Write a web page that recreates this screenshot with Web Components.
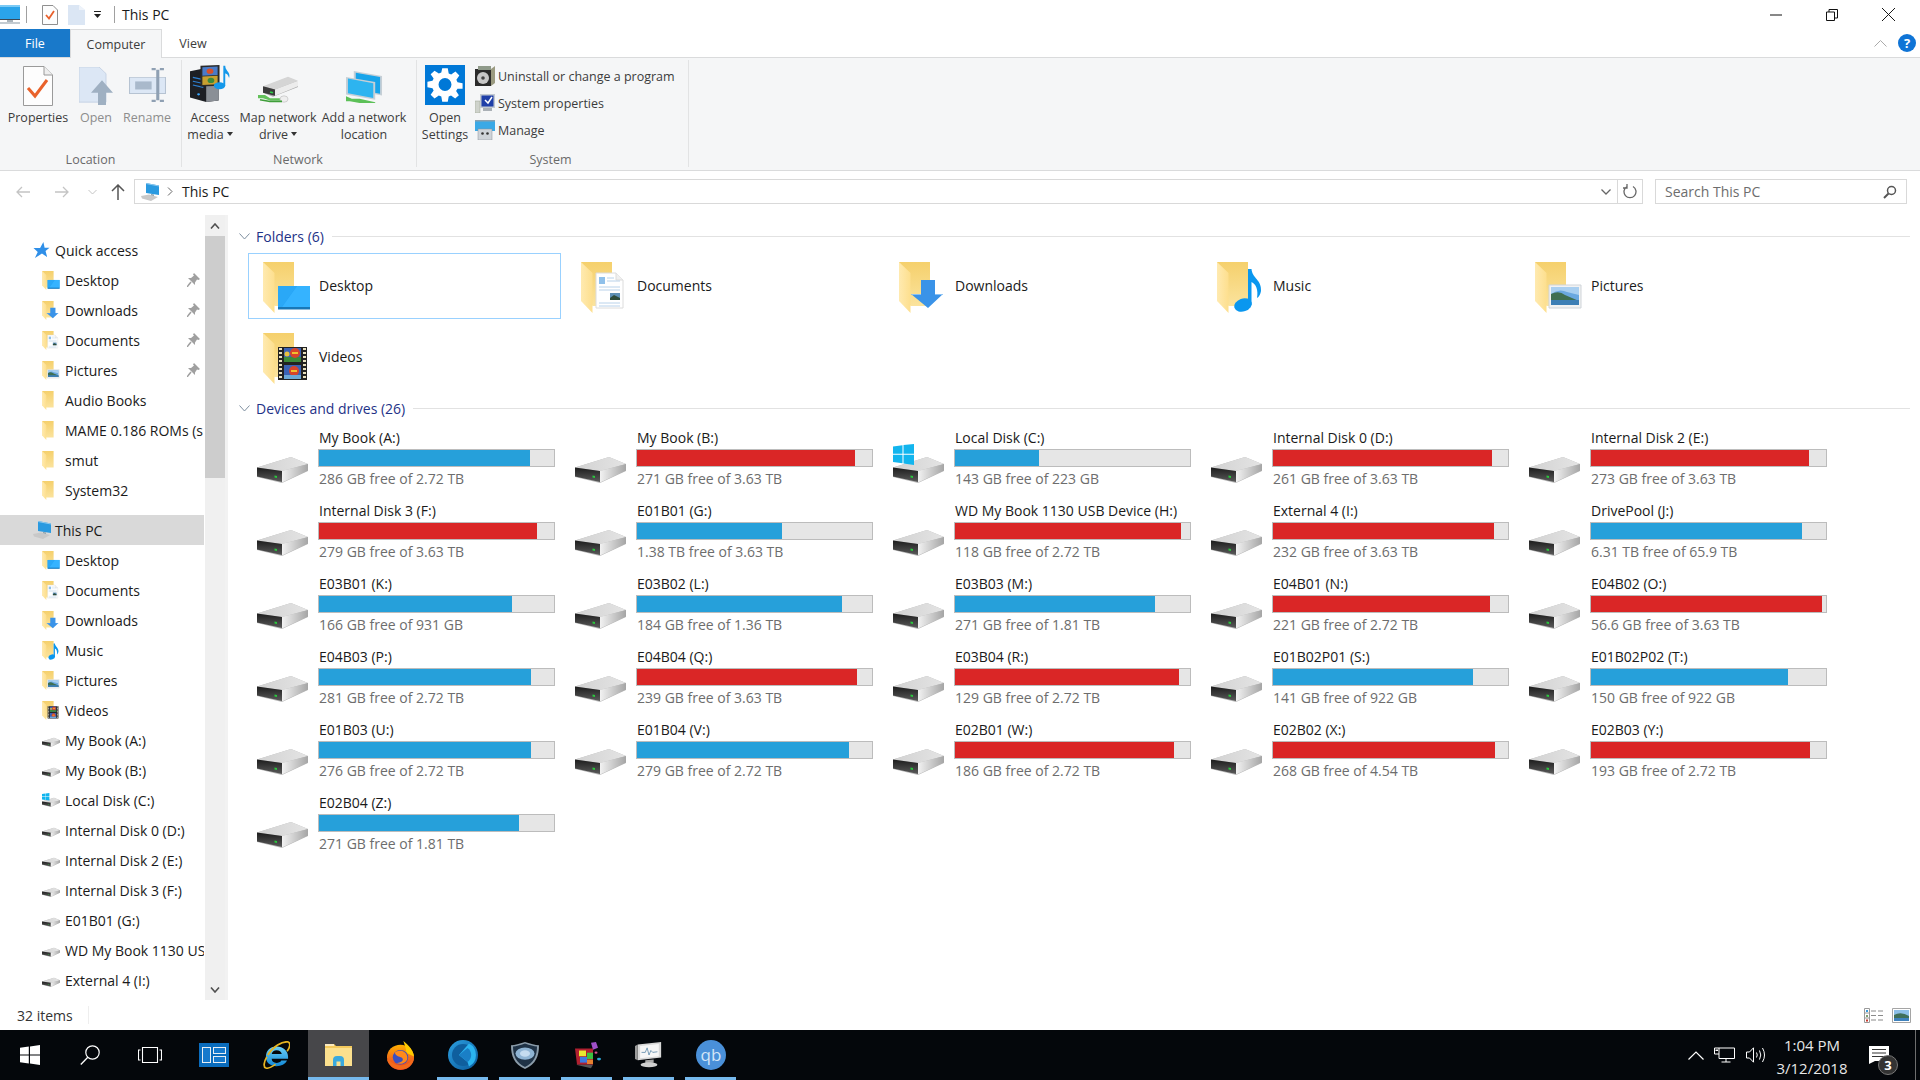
<!DOCTYPE html>
<html>
<head>
<meta charset="utf-8">
<title>This PC</title>
<style>
  html,body{margin:0;padding:0;background:#fff;overflow:hidden}
  body{font-family:"Open Sans","Liberation Sans",sans-serif;font-size:14px;color:#1a1a1a}
</style>
</head>
<body>
<win-shell>
  <title-bar></title-bar>
  <ribbon-tabs></ribbon-tabs>
  <ribbon-panel></ribbon-panel>
  <address-row></address-row>
  <explorer-main>
    <nav-pane slot="nav">
      <nav-item icon="star" level="1">Quick access</nav-item>
      <nav-item icon="desktop" pin>Desktop</nav-item>
      <nav-item icon="downloads" pin>Downloads</nav-item>
      <nav-item icon="documents" pin>Documents</nav-item>
      <nav-item icon="pictures" pin>Pictures</nav-item>
      <nav-item icon="folder">Audio Books</nav-item>
      <nav-item icon="folder">MAME 0.186 ROMs (s</nav-item>
      <nav-item icon="folder">smut</nav-item>
      <nav-item icon="folder">System32</nav-item>
      <nav-item icon="pc" level="1" selected style="margin-top:10px">This PC</nav-item>
      <nav-item icon="desktop">Desktop</nav-item>
      <nav-item icon="documents">Documents</nav-item>
      <nav-item icon="downloads">Downloads</nav-item>
      <nav-item icon="music">Music</nav-item>
      <nav-item icon="pictures">Pictures</nav-item>
      <nav-item icon="videos">Videos</nav-item>
      <nav-item icon="drive">My Book (A:)</nav-item>
      <nav-item icon="drive">My Book (B:)</nav-item>
      <nav-item icon="windrive">Local Disk (C:)</nav-item>
      <nav-item icon="drive">Internal Disk 0 (D:)</nav-item>
      <nav-item icon="drive">Internal Disk 2 (E:)</nav-item>
      <nav-item icon="drive">Internal Disk 3 (F:)</nav-item>
      <nav-item icon="drive">E01B01 (G:)</nav-item>
      <nav-item icon="drive">WD My Book 1130 USB Device (H:)</nav-item>
      <nav-item icon="drive">External 4 (I:)</nav-item>
    </nav-pane>
    <content-view slot="content">
      <group-header>Folders (6)</group-header>
      <tile-grid style="margin-top:6px">
        <folder-tile icon="desktop" selected>Desktop</folder-tile>
        <folder-tile icon="documents">Documents</folder-tile>
        <folder-tile icon="downloads">Downloads</folder-tile>
        <folder-tile icon="music">Music</folder-tile>
        <folder-tile icon="pictures">Pictures</folder-tile>
        <folder-tile icon="videos">Videos</folder-tile>
      </tile-grid>
      <group-header style="margin-top:7px">Devices and drives (26)</group-header>
      <tile-grid style="margin-top:5px">
        <drive-tile pct="89.9" free="286 GB free of 2.72 TB">My Book (A:)</drive-tile>
        <drive-tile pct="92.9" red free="271 GB free of 3.63 TB">My Book (B:)</drive-tile>
        <drive-tile pct="35.9" win free="143 GB free of 223 GB">Local Disk (C:)</drive-tile>
        <drive-tile pct="93" red free="261 GB free of 3.63 TB">Internal Disk 0 (D:)</drive-tile>
        <drive-tile pct="92.9" red free="273 GB free of 3.63 TB">Internal Disk 2 (E:)</drive-tile>
        <drive-tile pct="92.7" red free="279 GB free of 3.63 TB">Internal Disk 3 (F:)</drive-tile>
        <drive-tile pct="61.7" free="1.38 TB free of 3.63 TB">E01B01 (G:)</drive-tile>
        <drive-tile pct="96" red free="118 GB free of 2.72 TB">WD My Book 1130 USB Device (H:)</drive-tile>
        <drive-tile pct="94" red free="232 GB free of 3.63 TB">External 4 (I:)</drive-tile>
        <drive-tile pct="89.6" free="6.31 TB free of 65.9 TB">DrivePool (J:)</drive-tile>
        <drive-tile pct="82.2" free="166 GB free of 931 GB">E03B01 (K:)</drive-tile>
        <drive-tile pct="87.2" free="184 GB free of 1.36 TB">E03B02 (L:)</drive-tile>
        <drive-tile pct="85" free="271 GB free of 1.81 TB">E03B03 (M:)</drive-tile>
        <drive-tile pct="92.4" red free="221 GB free of 2.72 TB">E04B01 (N:)</drive-tile>
        <drive-tile pct="98.5" red free="56.6 GB free of 3.63 TB">E04B02 (O:)</drive-tile>
        <drive-tile pct="90" free="281 GB free of 2.72 TB">E04B03 (P:)</drive-tile>
        <drive-tile pct="93.8" red free="239 GB free of 3.63 TB">E04B04 (Q:)</drive-tile>
        <drive-tile pct="95.4" red free="129 GB free of 2.72 TB">E03B04 (R:)</drive-tile>
        <drive-tile pct="85" free="141 GB free of 922 GB">E01B02P01 (S:)</drive-tile>
        <drive-tile pct="84" free="150 GB free of 922 GB">E01B02P02 (T:)</drive-tile>
        <drive-tile pct="90" free="276 GB free of 2.72 TB">E01B03 (U:)</drive-tile>
        <drive-tile pct="90" free="279 GB free of 2.72 TB">E01B04 (V:)</drive-tile>
        <drive-tile pct="93.3" red free="186 GB free of 2.72 TB">E02B01 (W:)</drive-tile>
        <drive-tile pct="94.4" red free="268 GB free of 4.54 TB">E02B02 (X:)</drive-tile>
        <drive-tile pct="93" red free="193 GB free of 2.72 TB">E02B03 (Y:)</drive-tile>
        <drive-tile pct="85" free="271 GB free of 1.81 TB">E02B04 (Z:)</drive-tile>
      </tile-grid>
    </content-view>
  </explorer-main>
  <status-bar></status-bar>
  <task-bar></task-bar>
</win-shell>

<script>
// svg helpers, ids are per shadow root so the gradients can repeat between elements
const svg=(vb,w,h,body,extra='')=>`<svg xmlns="http://www.w3.org/2000/svg" viewBox="${vb}" width="${w}" height="${h}" ${extra}>${body}</svg>`;
const squash='preserveAspectRatio="none"';
const lift=n=>`style="margin-bottom:${n}px"`;

const overlays={
  folder:'',
  desktop:`<path d="M15 24H47V47H15Z" fill="#1c9af0"/><path d="M15 24H34L19 45H15Z" fill="#2aa8f7"/><path d="M34 24H47V45H19Z" fill="#35b3ff"/><path d="M15 45H47V47.5H15Z" fill="#1878b8"/>`,
  documents:`<path d="M15 11H35L42 18V46H15Z" fill="#fff" stroke="#dcdcdc"/><path d="M35 11V18H42" fill="#f0f0f0" stroke="#dcdcdc"/><path d="M18 15H24V22H18Z" fill="#8fc0ea"/><path d="M26 16H33M26 19H39M18 25H39M18 28H39M18 41H39M18 44H39" stroke="#b9d2ea"/><path d="M29 31H39V38H29Z" fill="#5d8fb5"/><path d="M29 36L33 33L39 36V38H29Z" fill="#2e4c3c"/>`,
  downloads:`<path d="M22 18H36V32H44L29 46L12 32H22Z" fill="#3a93e8"/><path d="M12 32H22V33H13ZM36 32H44L43 33H36Z" fill="#8ac2f5"/>`,
  music:`<ellipse cx="26" cy="43" rx="9" ry="6.5" transform="rotate(-20 26 43)" fill="#0a97ef"/><path d="M31 7H34.5C35 16 45 18 44 29C43.500 32 42 35 40 36C41.500 28 39 22 34.500 20V43H31Z" fill="#0a97ef"/>`,
  pictures:`<path d="M14 23H46V46H14Z" fill="#f2f2f2" stroke="#cfd4d9"/><path d="M16 25H44V43H16Z" fill="#6aa8e0"/><path d="M16 25H44V33L32 30Q24 26 16 32Z" fill="#a9cff0"/><path d="M16 32Q24 28 30 33L44 39V43H16Z" fill="#3f6f52"/><path d="M16 38H44V43H16Z" fill="#3d7fb5"/>`,
  videos:`<path d="M15 14H44V47H15Z" fill="#222"/><path d="M16 16H19M16 20H19M16 24H19M16 28H19M16 32H19M16 36H19M16 40H19M16 44H19M40 16H43M40 20H43M40 24H43M40 28H43M40 32H43M40 36H43M40 40H43M40 44H43" stroke="#e8e0c0" stroke-width="2"/><path d="M21 15H38V29H21Z" fill="#3b62b5"/><path d="M21 32H38V46H21Z" fill="#3b62b5"/><path d="M21 24H38V29H21Z" fill="#3c8a3a"/><circle cx="32" cy="20" r="5" fill="#d8442a"/><path d="M29 20H35" stroke="#f0c030" stroke-width="2"/><circle cx="24" cy="21" r="2.500" fill="#e8c040"/><circle cx="31" cy="38" r="5" fill="#d8442a"/><path d="M28 38H34" stroke="#f0c030" stroke-width="2"/><path d="M21 42H38V46H21Z" fill="#6ba8d8"/>`
};

const folderIcon=(name,w=48,h=51)=>svg('0 0 48 51',w,h,`
  <defs><linearGradient id="fb" x1="0" y1="0" x2="0" y2="1"><stop offset="0" stop-color="#f5d06c"/><stop offset="1" stop-color="#fbe39d"/></linearGradient>
  <linearGradient id="ff" x1="0" y1="0" x2="1" y2="0"><stop offset="0" stop-color="#ffeab0"/><stop offset="1" stop-color="#fddf8e"/></linearGradient></defs>
  <path d="M0 0H31V44H12L0 38Z" fill="url(#fb)"/><path d="M0 0L11.500 11V51L0 39Z" fill="url(#ff)"/>${overlays[name]||''}`);

const winLogo=(x,y,s)=>`<g transform="translate(${x} ${y}) scale(${s})"><path d="M0 2.500L9.500 1.200V9.700H0ZM10.500 1L21 0V9.700H10.500ZM0 10.700H9.500V19.200L0 18ZM10.500 10.700H21V21L10.500 19.400Z" fill="#12b5ee"/></g>`;

const driveIcon=(win,w=51,h=39)=>svg('0 -13 51 39',w,h,`
  <defs><linearGradient id="dt" x1="0" y1="0" x2="1" y2="0"><stop offset="0" stop-color="#d2d2d2"/><stop offset="1" stop-color="#e4e4e4"/></linearGradient>
  <linearGradient id="df" x1="0" y1="0" x2="0" y2="1"><stop offset="0" stop-color="#1d1d1d"/><stop offset="1" stop-color="#5a5a5a"/></linearGradient>
  <linearGradient id="dr" x1="0" y1="0" x2="1" y2="0"><stop offset="0" stop-color="#f2f2f2"/><stop offset="1" stop-color="#a5a5a5"/></linearGradient></defs>
  <path d="M0 10.500L34 0L51 7V14L25 26L0 20Z" fill="#b8b8b8"/>
  <path d="M0 10.500L34 0L51 7L25 14Z" fill="url(#dt)"/>
  <path d="M0 10.500L25 14V25L0 19.500Z" fill="url(#df)"/>
  <path d="M25 14L51 7V13.500L25 25.500Z" fill="url(#dr)"/>
  <path d="M17.500 18.500L20 19V21L17.500 20.500Z" fill="#29c83c"/>${win?winLogo(0,-13,1):''}`);

const pcBody=`<path d="M5 0L18 2.500V12L5 10Z" fill="#2a9ae0"/><path d="M5 0L18 2.500V3.500L5 1Z" fill="#8fc9ee"/><path d="M10 11L13 11.500V14L10 13.500Z" fill="#8aa0ae"/><path d="M0 13L8 11.500L17 14L10 18L1 15.500Z" fill="#c8c8c8"/>`;

const navIcons={
  star:svg('0 0 17 17',17,16,`<path d="M10.500 0L11.800 6H17L12.800 9.500L14.500 16L9 12.300L1.500 17L4.500 10.500L0 6.500H7Z" fill="#2f8fe8"/>`),
  pc:svg('0 0 18 18',18,18,pcBody),
  drive:driveIcon(false,18,14),
  windrive:driveIcon(true,18,14)
};

const stdStyle=`:host{display:block;font-family:"Open Sans","Liberation Sans",sans-serif;font-size:14px;box-sizing:border-box}*{box-sizing:border-box}`;

class Part extends HTMLElement{
  connectedCallback(){
    if(this.shadowRoot)return;
    this.attachShadow({mode:'open'}).innerHTML=`<style>${stdStyle}${this.css()}</style>${this.html()}`;
  }
  css(){return ''}
  html(){return '<slot></slot>'}
}

class WinShell extends Part{
  css(){return `:host{display:flex;flex-direction:column;width:1920px;height:1080px;background:#fff;overflow:hidden}`}
}
customElements.define('win-shell',WinShell);

class TitleBar extends Part{
  css(){return `
    :host{height:29px;display:flex;align-items:center;background:#fff;flex:none}
    .app{margin-right:5px;display:flex}
    .sep{width:1px;height:17px;background:#a0a0a0}
    .q{display:flex}
    .drop{margin:0 13px 0 9px;display:flex}
    .t{margin-left:7px;color:#1a1a1a;font-size:14px}
    .ctl{margin-left:auto;display:flex;padding-right:3px}
    .ctl span{width:56.5px;height:29px;display:flex;align-items:center;justify-content:center}
  `}
  html(){return `
    <span class="app">${svg('0 0 21 20',21,20,`<path d="M0 0H20V14H0Z" fill="#2aa4ea"/><path d="M0 0H20V2H0Z" fill="#7bcaf5"/><path d="M0 14H20V15H0Z" fill="#3b4a57"/><path d="M7 15H13V17H7Z" fill="#aab4bb"/><path d="M0 17H20V19H0Z" fill="#c3cbd1"/>`)}</span>
    <span class="sep"></span>
    <span class="q" style="margin-left:15px">${svg('0 0 16 20',16,20,`<path d="M.5.500H11L15.500 5V19.500H.5Z" fill="#fdfdfd" stroke="#8f8f8f"/><path d="M4 10L7 13.500L12 6" fill="none" stroke="#e8602c" stroke-width="1.800"/>`)}</span>
    <span class="q" style="margin-left:10px">${svg('0 0 17 20',17,20,`<path d="M0 0H11L17 5V20H0Z" fill="#dbe6f4"/><path d="M11 0V5H17Z" fill="#eef3fa"/>`)}</span>
    <span class="drop">${svg('0 0 7 7',7,7,`<path d="M0 0H7V1H0ZM0 3H7L3.500 7Z" fill="#222"/>`)}</span>
    <span class="sep"></span>
    <span class="t">This PC</span>
    <span class="ctl">
      <span>${svg('0 0 12 12',12,12,`<path d="M0 6H12" stroke="#111"/>`)}</span>
      <span>${svg('0 0 12 12',12,12,`<path d="M.5 3H8.500V11.500H.5ZM3 3V.5H11.500V9H8.500" fill="none" stroke="#111"/>`)}</span>
      <span>${svg('0 0 12 12',13,13,`<path d="M0 0L12 12M12 0L0 12" stroke="#111" stroke-width=".9"/>`)}</span>
    </span>
  `}
}
customElements.define('title-bar',TitleBar);

class RibbonTabs extends Part{
  css(){return `
    :host{height:29px;display:flex;background:#fff;border-bottom:1px solid #dadbdc;flex:none;position:relative}
    span{display:flex;align-items:center;justify-content:center;height:29px;font-size:12.500px}
    .file{width:70px;background:#1979ca;color:#fff;height:28px}
    .cur{width:92px;background:#f5f6f7;border:1px solid #dadbdc;border-bottom:none;color:#3c3c3c;height:29px}
    .view{width:62px;color:#3c3c3c;height:28px}
    .right{margin-left:auto;display:flex;gap:11px;padding-right:4px;height:28px}
    .help{width:18px;height:18px;border-radius:50%;background:#0f74d6;color:#fff;font-weight:700;font-size:13px;align-self:center}
  `}
  html(){return `<span class="file">File</span><span class="cur">Computer</span><span class="view">View</span>
    <div class="right"><span>${svg('0 0 13 7',13,7,`<path d="M.5 6.500L6.500.5L12.500 6.500" fill="none" stroke="#aaa"/>`)}</span><span class="help">?</span></div>`}
}
customElements.define('ribbon-tabs',RibbonTabs);

const ribbonIcons={
  properties:svg('0 0 30 40',30,40,`<path d="M.5.500H21L29.500 9V39.500H.5Z" fill="#fdfdfd" stroke="#9a9a9a"/><path d="M21 .5V9H29.500" fill="#eee" stroke="#9a9a9a"/><path d="M5 22L12 30L24 14" fill="none" stroke="#e9622b" stroke-width="3"/>`),
  open:svg('0 0 34 40',34,38,`<path d="M0 0H20L27 7V37H0Z" fill="#dce7f5" stroke="#c6d3e4"/><path d="M23 14L34 27H27V40H19V27H12Z" fill="#9fb0c2"/>`,`${squash} ${lift(1)}`),
  rename:svg('0 0 36 38',37,34,`<path d="M.5 10.500H35.500V28.500H.5Z" fill="#dce7f5" stroke="#b6c3d2"/><path d="M6 15H22V24H6Z" fill="#a9b9cb"/><path d="M22 1H26M30 1H34M28 2V36M22 37H26M30 37H34" fill="none" stroke="#8fa0b3" stroke-width="3"/>`,`${squash} ${lift(4)}`),
  media:svg('0 0 42 48',40,37,`<path d="M0 8L17 4L30 12V46L17 48L0 42Z" fill="#1d1f24"/><path d="M17 14L30 12V46L17 48Z" fill="#8a8f96"/><path d="M3 16L14 19M3 21L14 24M3 26L14 29" stroke="#2d7fd0" stroke-width="1.500"/><circle cx="9" cy="38" r="1.500" fill="#3aa7ff"/><path d="M11 1L31 0V27L11 28Z" fill="#2a2a2a"/><path d="M13 3L29 2V13L13 14Z" fill="#4a7bc8"/><path d="M13 15L29 14V25L13 26Z" fill="#c8a030"/><circle cx="21" cy="8" r="3.500" fill="#d8502a"/><circle cx="22" cy="20" r="3.500" fill="#3c8a3a"/><ellipse cx="31" cy="27" rx="6" ry="4.500" fill="#1498ea"/><path d="M35 1H37C37 8 43 9 41 17C40 12 38 11 37 11V27H35Z" fill="#1498ea"/>`,`${squash} ${lift(4)}`),
  map:svg('0 0 40 34',40,27,`<path d="M5 14L30 2L40 7V14L15 26L5 21Z" fill="#a8a8a8"/><path d="M5 13L30 1L40 6L17 17Z" fill="#d5d5d5"/><path d="M5 13L17 17V25L5 21Z" fill="#3b3b3b"/><path d="M17 17L40 6V13L17 25Z" fill="#ececec"/><path d="M12 20L15 21" stroke="#2fd14a" stroke-width="2"/><path d="M0 24H7L12 28H24V31H12L5 28H0Z" fill="#63c15b"/><circle cx="26" cy="29" r="4" fill="#eee" stroke="#ccc"/><path d="M2 30L12 32H24" stroke="#3f9e3a" stroke-width="2" fill="none"/>`,`${squash} ${lift(3)}`),
  network:svg('0 0 38 38',37,32,`<path d="M8 0L37 6V29L8 23Z" fill="#c6cfd6"/><path d="M10 2L35 7V27L10 22Z" fill="#18a4ea"/><path d="M0 7L30 13V34L0 28Z" fill="#c6cfd6"/><path d="M2 9L28 14.500V32L2 26.500Z" fill="#2db4f0"/><path d="M0 30L6 33H14L30 37V38H14L4 36H0Z" fill="#5cc058"/>`,`${squash} ${lift(3)}`),
  settings:svg('0 0 40 40',40,40,`<rect width="40" height="40" fill="#0078d7"/><path fill-rule="evenodd" fill="#fff" d="M17 5H23L24 10.500L26.700 11.700L31.300 8.500L35.500 12.700L32.300 17.300L33.500 20L39 21V27H33.500L32 29.500L35 34L31 37.500L26.500 34.500L24 35.500L23 41H17L16 35.500L13.300 34.500L8.700 37.500L4.500 33.500L7.700 29L6.500 26.500L1 25.500V19.500L6.500 18.500L7.700 16L4.500 11.500L8.700 7.500L13.300 10.500L16 9.500ZM20 15.500A7 7 0 1 0 20 29.500A7 7 0 1 0 20 15.500Z" transform="translate(1.500 -1.300) scale(.925)"/>`,lift(1)),
  uninstall:svg('0 0 20 20',20,20,`<path d="M0 3H16V20H0Z" fill="#2b2b2b"/><path d="M3 0H16V4H3Z" fill="#8f9a8a"/><path d="M16 3L20 0V17L16 20Z" fill="#9a9a80"/><circle cx="8" cy="12" r="6" fill="#c8c8c8"/><circle cx="8" cy="12" r="1.800" fill="#444"/>`),
  system:svg('0 0 20 20',20,20,`<path d="M0 8H5V20H0Z" fill="#cfd3cc" stroke="#9aa093" stroke-width=".5"/><path d="M5 1H20V15H5Z" fill="#c3cad1"/><path d="M6.500 2.500H18.500V13.500H6.500Z" fill="#1f3fa8"/><path d="M10 7L13 10L17 4" fill="none" stroke="#fff" stroke-width="1.500"/><path d="M8 15H17V18H8Z" fill="#aab0b6"/>`),
  manage:svg('0 0 20 20',20,20,`<path d="M0 0H20V11H0Z" fill="#3ba9e6"/><path d="M0 0H20V1.500H0Z" fill="#8ba0ae"/><path d="M3 9H17V20H3Z" fill="#cfd4d9" stroke="#89929a" stroke-width=".5"/><circle cx="7.500" cy="13.500" r="1.300" fill="#333"/><circle cx="12.500" cy="13.500" r="1.300" fill="#333"/>`),
};

class RibbonPanel extends Part{
  css(){return `
    :host{height:113px;display:flex;background:#f5f6f7;border-bottom:1px solid #dadbdc;flex:none;color:#3c3c3c;font-size:12.500px}
    .group{display:flex;flex-direction:column;border-right:1px solid #e2e3e4;margin-top:2px;height:107px;flex:none}
    .items{display:flex;height:91px}
    .name{text-align:center;color:#6a6a6a;line-height:17px;height:15px}
    .btn{display:flex;flex-direction:column;align-items:center;flex:none;text-align:center;line-height:17px;white-space:nowrap}
    .ico{height:46px;display:flex;align-items:flex-end;justify-content:center;margin-bottom:2.500px}
    .off{color:#8d8d8d}
    .caret{display:inline-block;border:3.500px solid transparent;border-top:4px solid #333;border-bottom:none;vertical-align:middle;margin:0 0 2px 3px}
    .small{display:flex;flex-direction:column;margin:6px 0 0 8px;gap:7px}
    .small div{display:flex;align-items:center;gap:3px;height:20px;white-space:nowrap}
  `}
  html(){const b=(w,ic,t,cls='',ml=0)=>`<div class="btn ${cls}" style="width:${w}px;margin-left:${ml}px"><div class="ico">${ic}</div><div>${t}</div></div>`;
    const c='<i class="caret"></i>';
    return `
    <div class="group" style="width:182px"><div class="items">
      ${b(66,ribbonIcons.properties,'Properties','',5)}${b(50,ribbonIcons.open,'Open','off')}${b(52,ribbonIcons.rename,'Rename','off')}
    </div><div class="name">Location</div></div>
    <div class="group" style="width:235px"><div class="items">
      ${b(50,ribbonIcons.media,'Access<br>media'+c,'',3)}${b(82,ribbonIcons.map,'Map network<br>drive'+c,'',2)}${b(86,ribbonIcons.network,'Add a network<br>location','',2)}
    </div><div class="name" style="padding-right:2px">Network</div></div>
    <div class="group" style="width:272px"><div class="items">
      ${b(44,ribbonIcons.settings,'Open<br>Settings','',6)}
      <div class="small">
        <div>${ribbonIcons.uninstall}Uninstall or change a program</div>
        <div>${ribbonIcons.system}System properties</div>
        <div>${ribbonIcons.manage}Manage</div>
      </div>
    </div><div class="name" style="padding-right:4px">System</div></div>`}
}
customElements.define('ribbon-panel',RibbonPanel);

class AddressRow extends Part{
  css(){return `
    :host{height:44px;display:flex;align-items:flex-start;padding-top:8px;flex:none}
    .nav{display:flex;width:134px;height:25px;align-items:center}
    .nav span{display:flex;justify-content:center;align-items:center}
    .box{width:1509px;height:25px;border:1px solid #d9d9d9;display:flex;align-items:center;padding-left:6px;color:#1a1a1a}
    .box .txt{margin-left:9px}
    .box .chev{margin-left:8px;display:flex}
    .tail{margin-left:auto;display:flex;height:100%;align-items:center}
    .tail span{display:flex;align-items:center;justify-content:center;height:100%}
    .search{width:252px;height:25px;border:1px solid #d9d9d9;margin-left:12px;display:flex;align-items:center;justify-content:space-between;padding:0 9px;color:#6d6d6d}
  `}
  html(){return `
    <div class="nav">
      <span style="width:18px;margin-left:14px">${svg('0 0 14 12',14,12,`<path d="M14 6H1M6 1L1 6L6 11" fill="none" stroke="#c4c4c4" stroke-width="1.300"/>`)}</span>
      <span style="width:18px;margin-left:21px">${svg('0 0 14 12',14,12,`<path d="M0 6H13M8 1L13 6L8 11" fill="none" stroke="#c4c4c4" stroke-width="1.300"/>`)}</span>
      <span style="width:10px;margin-left:16px">${svg('0 0 9 6',9,6,`<path d="M.5 1L4.500 5L8.500 1" fill="none" stroke="#c4c4c4"/>`)}</span>
      <span style="width:16px;margin-left:13px">${svg('0 0 14 16',14,16,`<path d="M7 16V1M1 7L7 1L13 7" fill="none" stroke="#555" stroke-width="1.500"/>`)}</span>
    </div>
    <div class="box">
      ${svg('0 0 18 18',18,18,pcBody)}
      <span class="chev">${svg('0 0 6 9',6,9,`<path d="M1 .5L5 4.500L1 8.500" fill="none" stroke="#666"/>`)}</span>
      <span class="txt">This PC</span>
      <div class="tail">
        <span style="width:24px;border-right:1px solid #d9d9d9">${svg('0 0 10 6',10,6,`<path d="M.5 .5L5 5L9.500 .5" fill="none" stroke="#666" stroke-width="1.300"/>`)}</span>
        <span style="width:24px">${svg('0 0 14 15',14,15,`<path d="M4 2.500A6 6 0 1 0 10 2.500M4 0V4H0" fill="none" stroke="#666" stroke-width="1.300"/>`)}</span>
      </div>
    </div>
    <div class="search"><span>Search This PC</span>${svg('0 0 14 14',14,14,`<circle cx="8.500" cy="5.500" r="4" fill="none" stroke="#555" stroke-width="1.500"/><path d="M5.500 8.500L1 13" stroke="#555" stroke-width="2"/>`)}</div>
  `}
}
customElements.define('address-row',AddressRow);

class ExplorerMain extends Part{
  css(){return `:host{flex:1;display:flex;min-height:0}.l{width:228px;flex:none;display:flex}.r{flex:1;min-width:0}`}
  html(){return `<div class="l"><slot name="nav"></slot></div><div class="r"><slot name="content"></slot></div>`}
}
customElements.define('explorer-main',ExplorerMain);

class NavPane extends Part{
  css(){return `
    :host{display:flex;width:228px;height:100%;border-right:3px solid #f2f2f2}
    .list{width:205px;flex:none;padding-top:20px;overflow:hidden}
    .bar{width:20px;flex:none;background:#f0f0f0;display:flex;flex-direction:column}
    .btn{height:21px;display:flex;align-items:center;justify-content:center}
    .thumb{height:242px;background:#cdcdcd;flex:none}
    .sp{flex:1}
  `}
  html(){return `<div class="list"><slot></slot></div>
    <div class="bar"><div class="btn">${svg('0 0 10 6',10,6,`<path d="M1 5.500L5 1L9 5.500" fill="none" stroke="#505050" stroke-width="1.600"/>`)}</div>
    <div class="thumb"></div><div class="sp"></div>
    <div class="btn">${svg('0 0 10 6',10,6,`<path d="M1 .5L5 5L9 .5" fill="none" stroke="#505050" stroke-width="1.600"/>`)}</div></div>`}
}
customElements.define('nav-pane',NavPane);

class NavItem extends Part{
  css(){return `
    :host{display:flex;height:30px;align-items:center;padding-left:42px;white-space:nowrap;color:#1a1a1a;overflow:hidden;width:204px}
    :host([level="1"]){padding-left:33px}
    :host([selected]){background:#d9d9d9}
    .i{width:18px;height:19px;display:flex;align-items:center;flex:none;margin-right:5px}
    :host([level="1"]) .i{margin-right:4px}
    .pin{position:absolute;left:187px;display:flex}
    .t{flex:none}
  `}
  html(){
    const n=this.getAttribute('icon');
    const ic=navIcons[n]||folderIcon(n,18,19);
    const pin=this.hasAttribute('pin')?`<span class="pin">${svg('0 0 13 14',13,14,`<path d="M7 0L13 6L11.500 7L10 6.500L8 9.500L8 12L1 5L4 5L7 2.500L6 1.500Z" fill="#a0a0a0"/><path d="M4 9L0 14" stroke="#a0a0a0" stroke-width="1.500"/>`)}</span>`:'';
    return `<span class="i">${ic}</span><span class="t"><slot></slot></span>${pin}`;
  }
}
customElements.define('nav-item',NavItem);

class ContentView extends Part{
  css(){return `:host{padding:10px 10px 0 10px;height:100%;overflow:hidden}`}
}
customElements.define('content-view',ContentView);

class GroupHeader extends Part{
  css(){return `
    :host{display:flex;align-items:center;height:22px;color:#1e3287}
    .c{display:flex;width:12px;justify-content:center}
    .t{margin:0 8px 0 6px}
    .l{flex:1;height:1px;background:#e2e2e2}
  `}
  html(){return `<span class="c">${svg('0 0 11 7',11,7,`<path d="M.5 .5L5.500 6L10.500 .5" fill="none" stroke="#7e8fa0"/>`)}</span><span class="t"><slot></slot></span><span class="l"></span>`}
}
customElements.define('group-header',GroupHeader);

class TileGrid extends Part{
  css(){return `:host{display:grid;grid-template-columns:repeat(5,313px);column-gap:5px;row-gap:5px;margin-left:10px}`}
}
customElements.define('tile-grid',TileGrid);

class FolderTile extends Part{
  css(){return `
    :host{display:grid;grid-template-columns:14px 56px 1fr;height:66px;align-items:center;border:1px solid transparent;color:#1a1a1a}
    :host([selected]){border-color:#99d1ff}
    .i{grid-column:2;display:flex;margin-top:2px}
    .t{padding-bottom:2px}
  `}
  html(){return `<span class="i">${folderIcon(this.getAttribute('icon'))}</span><span class="t"><slot></slot></span>`}
}
customElements.define('folder-tile',FolderTile);

class DriveTile extends Part{
  css(){return `
    :host{display:grid;grid-template-columns:70px 237px;height:68px;color:#1a1a1a}
    .i{padding:20px 0 0 9px;display:flex;align-items:flex-start}
    .m{padding-top:4px}
    .n{display:block;height:20px;line-height:20px;padding-left:1px;white-space:nowrap}
    .b{height:18px;margin-top:1px;background:#e6e6e6;border:1px solid #bcbcbc}
    .f{height:100%;background:#26a0da}
    :host([red]) .f{background:#da2626}
    .g{height:20px;line-height:20px;margin-top:2px;padding-left:1px;color:#6d6d6d;white-space:nowrap}
  `}
  html(){return `<div class="i">${driveIcon(this.hasAttribute('win'))}</div>
    <div class="m"><span class="n"><slot></slot></span>
    <div class="b"><div class="f" style="width:${this.getAttribute('pct')}%"></div></div>
    <div class="g">${this.getAttribute('free')}</div></div>`}
}
customElements.define('drive-tile',DriveTile);

class StatusBar extends Part{
  css(){return `
    :host{height:30px;display:flex;align-items:center;padding-left:17px;flex:none;color:#333}
    .s{width:1px;height:18px;background:#eee;margin-left:15px}
    .v{margin-left:auto;display:flex;gap:9px;padding-right:9px;align-items:center}
  `}
  html(){return `<span>32 items</span><span class="s"></span>
    <div class="v">${svg('0 0 19 15',19,15,`<path d="M.5 .5H5.500V14.500H.5ZM.5 5H5.500M.5 10H5.500" fill="#fff" stroke="#9a9a9a"/><path d="M2 2H4V4H2Z" fill="#3a9ad9"/><path d="M2 7H4V9H2Z" fill="#7f9f6f"/><path d="M2 11.500H4V13.500H2Z" fill="#c8382c"/><path d="M7 3H12M14 3H19M7 7.500H12M14 7.500H19M7 12H12M14 12H19" stroke="#8a8a8a"/>`)}
    ${svg('0 0 19 15',19,15,`<path d="M.5 .5H18.500V14.500H.5Z" fill="#fff" stroke="#a5a5a5"/><path d="M2 2H17V13H2Z" fill="#8ec0e8"/><path d="M2 7Q9 3 17 8V10H2Z" fill="#41705a"/><path d="M2 10H17V13H2Z" fill="#3f82bd"/>`)}</div>`}
}
customElements.define('status-bar',StatusBar);

const taskIcons={
  start:svg('0 0 20 20',20,20,`<path d="M0 2.800L8.800 1.600V9.500H0ZM10 1.400L20 0V9.500H10ZM0 10.500H8.800V18.400L0 17.200ZM10 10.500H20V20L10 18.600Z" fill="#fff"/>`),
  search:svg('0 0 20 20',20,20,`<circle cx="12.500" cy="7.500" r="6.700" fill="none" stroke="#fff" stroke-width="1.200"/><path d="M7.800 12.300L.8 19.500" stroke="#fff" stroke-width="1.300"/>`),
  taskview:svg('0 0 24 16',24,16,`<path d="M4.500 .5H19.500V15.500H4.500Z" fill="none" stroke="#fff" stroke-width="1.100"/><path d="M2.500 3H.5V13H2.500M21.500 3H23.500V13H21.500" fill="none" stroke="#fff" stroke-width="1.100"/>`),
  news:svg('0 0 30 24',30,24,`<rect width="30" height="24" fill="#0a6cbd"/><path d="M3 4H12V20H3ZM14 4H27V11H14ZM14 13H27V20H14Z" fill="#e8eef4"/><path d="M4 5H11V19H4ZM15 5H26V10H15ZM15 14H26V19H15Z" fill="#1679cc"/>`),
  ie:svg('0 0 28 30',27,28,`<defs><linearGradient id="ie" x1="0" y1="0" x2="0" y2="1"><stop offset="0" stop-color="#6ed0f6"/><stop offset="1" stop-color="#1188d8"/></linearGradient></defs>
    <path fill-rule="evenodd" d="M14 6C7 6 3 11 3 17C3 23 7 27 14 27C19 27 23 25 25 21H19C18 23 16 23.500 14 23.500C11 23.500 9 21.500 9 19H26C26 18 26 17.500 26 17C26 11 21 6 14 6ZM9 14C9.500 11.500 11.500 10 14 10C17 10 19 11.500 19.500 14Z" fill="url(#ie)"/>
    <path d="M5 15C10 6 20 0 26 1C29 2 28 7 25 11M4 17C1 22 0 28 3 29C6 30 10 27 13 25" fill="none" stroke="#e6b422" stroke-width="1.800"/>`,squash),
  explorer:svg('0 0 27 22',27,22,`<path d="M0 0H9L11 2H27V22H0Z" fill="#f3c95c"/><path d="M0 4H27V22H0Z" fill="#fbe08e"/><path d="M0 0H9V2H0Z" fill="#fff" opacity=".6"/><path d="M8 22V16Q8 12 12 12H15Q19 12 19 16V22H15.500V17.500H11.500V22Z" fill="#3aa9de"/>`),
  firefox:svg('0 0 28 32',27,29,`<defs><linearGradient id="ff1" x1="0" y1="0" x2="0" y2="1"><stop offset="0" stop-color="#ffb000"/><stop offset="1" stop-color="#e8352a"/></linearGradient></defs>
    <ellipse cx="14" cy="18" rx="14" ry="14" fill="url(#ff1)"/><path d="M17 0C23 5 27 10 28 17L20 13C20 8 18 4 17 0Z" fill="#ffcb00"/><circle cx="14" cy="18" r="8" fill="#3a4fc0"/><path d="M8 13C11 9 20 10 21 17C22 24 14 27 9 24C13 25 18 22 16 19C14 17 10 18 8 13Z" fill="#ff8a1a"/><path d="M0 20C2 29 11 33 18 31C24 29 28 24 28 17C25 26 13 30 6 24Z" fill="#f26a1b"/>`,squash),
  blue:svg('0 0 30 30',30,30,`<defs><linearGradient id="bl" x1="0" y1="0" x2="1" y2="1"><stop offset="0" stop-color="#2c9fe0"/><stop offset="1" stop-color="#0a5a9c"/></linearGradient></defs>
    <circle cx="15" cy="15" r="15" fill="url(#bl)"/><circle cx="15" cy="15" r="11" fill="#0f5f9e"/><path d="M21 3.500A13 13 0 0 1 21 26.500L19.500 22L11 15Z" fill="#2bb4f0"/><path d="M19.500 8A8.500 8.500 0 0 1 19.500 22L11 15Z" fill="#1a7fc6"/>`),
  shield:svg('0 0 28 42',28,27,`<path d="M14 0C20 3 24 5 28 5C28 22 25 34 14 42C3 34 0 22 0 5C4 5 8 3 14 0Z" fill="#8b9caa"/><path d="M14 2.500C19 5 23 7 26 7C26 21 23 32 14 39C5 32 2 21 2 7C5 7 9 5 14 2.500Z" fill="#1f3246"/><circle cx="14" cy="18" r="9.500" fill="#8fb4d4"/><circle cx="14" cy="18" r="5" fill="#c5dcf0"/>`,squash),
  rainbow:svg('0 0 28 38',28,27,`<path d="M2 9H20V32H4Z" fill="#b02030"/><path d="M6 12H13V20H6Z" fill="#e8e830"/><path d="M14 15H20V24H14Z" fill="#3ac040"/><path d="M7 21H14V29H7Z" fill="#3a7ae0"/><path d="M14 25H20V31H14Z" fill="#e88030"/><path d="M18 1L23 0L25 8L20 11Z" fill="#a050c8"/><path d="M3 32L18 37L20 32Z" fill="#555"/><circle cx="26" cy="24" r="2" fill="#28a8d8"/><circle cx="23" cy="15" r="1.500" fill="#d85090"/>`,squash),
  monitor:svg('0 0 30 40',28,26,`<path d="M3 4L28 0V24L3 28Z" fill="#d8d8d8"/><path d="M5.500 6L25.500 3V22L5.500 25Z" fill="#f6f6f6"/><path d="M7 16L11 16L13 9L15 20L17 13L19 16L24 15" fill="none" stroke="#5a87a8"/><path d="M0 6L3 4V28L0 26Z" fill="#9a9a9a"/><path d="M11 28L20 27V32L11 33Z" fill="#aaa"/><ellipse cx="15" cy="35" rx="9" ry="4" fill="#d0d0d0"/>`,squash),
  qb:svg('0 0 30 30',30,30,`<circle cx="15" cy="15" r="15" fill="#4a90d9"/><text x="15" y="20.500" text-anchor="middle" font-family="Open Sans" font-size="17" fill="#d4e6f7">qb</text>`)
};

class TaskBar extends Part{
  css(){return `
    :host{height:50px;background:#04070b;display:flex;flex:none;color:#e8e8e8;font-size:15px}
    .b{height:50px;display:flex;align-items:center;justify-content:center;flex:none;box-sizing:border-box;border-bottom:3px solid transparent}
    .b svg{margin-top:3px}
    .on{border-bottom-color:#76b9ed}
    .cur{background:#47474a}
    .tray{margin-left:auto;display:flex;align-items:center}
    .tray>span{display:flex;align-items:center;justify-content:center}
    .clock{width:84px;text-align:center;line-height:23px;margin-left:3px;display:block !important;padding-top:3px}
    .note{position:relative;width:50px;height:50px;margin-right:11px}
    .badge{position:absolute;left:24px;top:25px;width:20px;height:20px;border-radius:50%;background:#333;border:1px solid #777;color:#fff;font-weight:700;font-size:13px;display:flex;align-items:center;justify-content:center;line-height:1}
    .edge{width:1px;height:50px;background:#6e6e6e;margin-right:4px}
  `}
  html(){
    const b=(w,n,c='',ml=0)=>`<span class="b ${c}" style="width:${w}px;margin-left:${ml}px">${taskIcons[n]}</span>`;
    return `
    ${b(60,'start')}${b(60,'search')}${b(60,'taskview')}${b(68,'news')}${b(57,'ie')}
    ${b(61,'explorer','on cur','3')}${b(62,'firefox')}${b(51,'blue','on','6')}${b(51,'shield','on','11')}${b(51,'rainbow','on','11')}${b(51,'monitor','on','11')}${b(51,'qb','on','11')}
    <div class="tray">
      <span style="width:16px">${svg('0 0 16 9',16,9,`<path d="M.5 8.500L8 1L15.500 8.500" fill="none" stroke="#fff" stroke-width="1.200"/>`)}</span>
      <span style="width:21px;margin-left:10px">${svg('0 0 21 16',21,16,`<path d="M5 1H20.500V11.500H5M.5 1H5V7H.5ZM12 11.500V15M7.500 15H16.500M5 7V11.500" fill="none" stroke="#fff"/><path d="M1.500 2.500H4V4H1.500Z" fill="#fff"/>`)}</span>
      <span style="width:21px;margin-left:11px">${svg('0 0 21 16',21,16,`<path d="M.5 5H3.500L7.500 .8V15.200L3.500 11H.5Z" fill="none" stroke="#fff"/><path d="M10.500 5.500Q12 8 10.500 10.500M13.500 3.500Q16 8 13.500 12.500M16.500 1Q20.500 8 16.500 15" fill="none" stroke="#fff"/>`)}</span>
      <span class="clock">1:04 PM<br>3/12/2018</span>
      <span class="note">${svg('0 0 20 18',20,18,`<path d="M0 0H20V15H6L0 18Z" fill="#fff"/><path d="M3 3.500H17M3 7H17M3 10.500H17" stroke="#333"/>`)}<span class="badge">3</span></span>
      <span class="edge"></span>
    </div>`}
}
customElements.define('task-bar',TaskBar);
</script>
</body>
</html>
